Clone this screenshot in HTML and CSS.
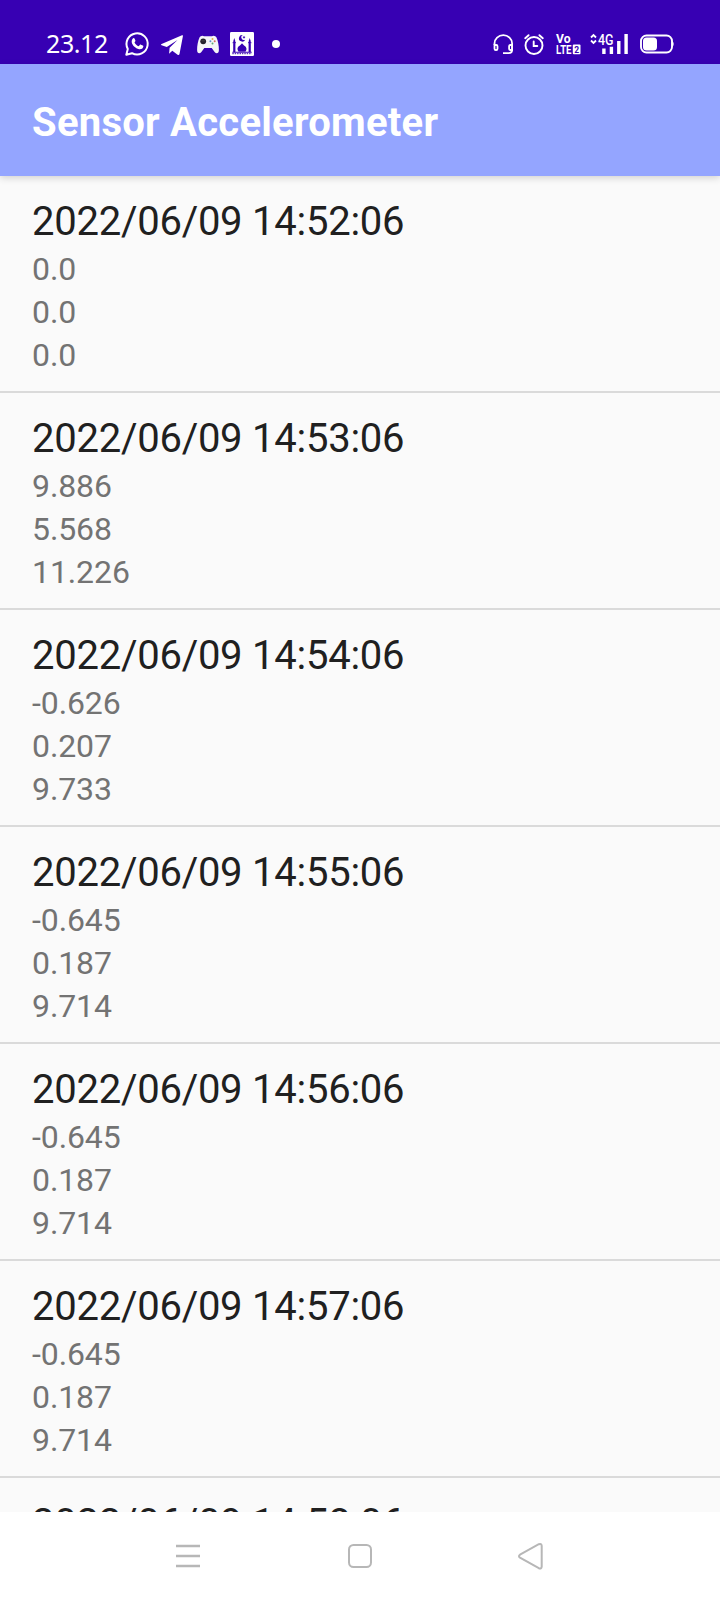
FILE: index.html
```html
<!DOCTYPE html>
<html lang="en">
<head>
<meta charset="utf-8">
<title>Sensor Accelerometer</title>
<link rel="stylesheet" href="styles.css">
</head>
<body>
<div class="screen">
  <header class="status">
    <div class="status-left">
      <span class="clock">23.12</span>
      <svg class="whatsapp" width="24" height="24" viewBox="0 0 24 24"><path d="M1.3 22.7 2.8 17A10.6 10.6 0 1 1 7 21.2Z" fill="none" stroke="#fff" stroke-width="2" stroke-linejoin="round"/><path d="M8.3 6.2c.7-.3 1.1 0 1.400.7l.7 1.600c.2.600-.1 1-.9 1.900 1 1.900 2.300 3 4.200 3.800l1.100-1.300c.3-.400.7-.400 1.100-.2l1.900.9c.6.300.6.600.5 1.200-.4 2-2.500 2.800-4.200 2.400-3.800-1-7-4.200-7.400-7.300-.1-1.700.6-3.100 1.600-3.700Z" fill="#fff"/></svg>
      <svg class="telegram" width="22" height="20" viewBox="0 0 22 20"><path d="M21 .3.6 9.100c-.8.400-.7 1 0 1.200l5.200 1.600L16.500 4.900 8.600 12.800l-.5 6 3.200-3 5.300 4c1 .5 1.600.2 1.900-.8L21.900 1.300c.2-.9-.2-1.200-.9-1Z" fill="#fff"/></svg>
      <svg class="gamepad" width="22" height="19" viewBox="0 0 22 19"><path d="M2.500 2.500C3.500.8 5.500.1 7 1.200h8c1.500-1.100 3.500-.4 4.500 1.300C21 6 22 11 21.900 15c0 3.400-2.500 4.200-4.300 1.900L14.700 13H7.300l-2.900 3.900C2.600 19.200.1 18.400.1 15 0 11 1 6 2.500 2.500Z" fill="#f5f5f8"/><circle cx="6.200" cy="6.300" r="2.900" fill="#25222d"/><path d="M4.500 5.800h3.400" stroke="#555" stroke-width=".6"/><circle cx="15.500" cy="4" r="1" fill="#dfaf45"/><circle cx="13.400" cy="6.200" r="1" fill="#5a8ed2"/><circle cx="17.700" cy="6.200" r="1" fill="#d46e66"/><circle cx="15.500" cy="8.400" r="1" fill="#5bab70"/></svg>
      <svg class="mosque" width="24" height="24" viewBox="0 0 24 24"><rect width="24" height="24" rx="1.200" fill="#fff"/><g fill="#3700b3"><path d="M12.800 3a3.300 3.300 0 1 0 2.400 4.700 2.600 2.600 0 1 1-2.400-4.700ZM14 3.800l.5 1 1 .1-.8.7.2 1-.9-.5-.9.500.2-1-.8-.7 1-.1ZM12 11c.4 2 4.500 3 4.500 6 0 1-.4 1.800-1 2.500h-7c-.6-.7-1-1.500-1-2.500C7.500 14 11.600 13 12 11ZM3.200 12h2.200v8H3.200ZM4.300 6l1 3v4h-2V9ZM2.600 10.200H6v1H2.600ZM18.600 12h2.200v8h-2.200ZM19.700 6l1 3v4h-2V9ZM18 10.200h3.400v1H18ZM2.300 19.700h19.400v1.100H2.300Z"/><path d="M2.300 21.700h19.400" stroke="#3700b3" stroke-width="1" stroke-dasharray="1.500 .9"/></g></svg>
      <svg class="dot" width="8" height="8" viewBox="0 0 8 8"><circle cx="4" cy="4" r="4" fill="#fff"/></svg>
    </div>
    <div class="status-right">
      <svg class="headset" width="21" height="21" viewBox="0 0 21 21" fill="none" stroke="#fff" stroke-width="1.800"><path d="M1.500 11V9.500a8.800 8.300 0 0 1 17.600 0V15.500c0 2.700-1 3.700-3.400 3.700H10"/><path d="M1.500 11h1.700c.9 0 1.300.4 1.300 1.300v2.400c0 .9-.4 1.300-1.300 1.300H2.800c-.9 0-1.300-.4-1.300-1.300ZM19.100 11h-1.700c-.9 0-1.300.4-1.300 1.300v2.400c0 .9.4 1.300 1.300 1.300h1.700Z"/></svg>
      <svg class="alarm" width="20" height="21" viewBox="0 0 20 21" fill="none" stroke="#fff" stroke-width="1.900" stroke-linecap="round"><circle cx="10" cy="11.500" r="8.500"/><path d="M1.200 4.200 4.600 1.200M18.800 4.200l-3.400-3M9.700 7.500V12h3.600"/></svg>
      <svg class="volte" width="25" height="21" viewBox="0 0 25 21"><g fill="#fff" font-family="Roboto, sans-serif" font-weight="700" font-size="13.500"><text x="0" y="9.300" textLength="14.500" lengthAdjust="spacingAndGlyphs">Vo</text><text x="0" y="20.200" textLength="15.500" lengthAdjust="spacingAndGlyphs">LTE</text></g><rect x="16.800" y="10.600" width="7.700" height="9.600" rx="1" fill="#fff"/><text x="18.300" y="18.500" font-family="Roboto, sans-serif" font-size="8.500" font-weight="700" fill="#3700b3">2</text></svg>
      <svg class="signal" width="40" height="22" viewBox="0 0 40 22"><path d="M1 4.500 3.500 2 6 4.500M1 7.500 3.500 10 6 7.500" fill="none" stroke="#fff" stroke-width="1.800"/><text x="8" y="12" textLength="15.500" lengthAdjust="spacingAndGlyphs" font-family="Roboto, sans-serif" font-size="14.500" font-weight="500" fill="#fff">4G</text><path d="M12.200 15.500h3.400V21h-3.400ZM19.700 13.800h3.400V21h-3.400ZM27.100 8h3.400v13h-3.400ZM34.400 1h3.400v20h-3.400Z" fill="#fff"/></svg>
      <svg class="battery" width="34" height="20" viewBox="0 0 34 20"><rect x="1" y="1.500" width="31" height="17" rx="5.500" fill="none" stroke="#fff" stroke-width="1.900"/><rect x="3" y="3.600" width="14" height="12.800" rx="3.500" fill="#fff"/><path d="M32 7c2.200.8 2.200 5.200 0 6Z" fill="#fff"/></svg>
    </div>
  </header>
  <div class="appbar"><h1 class="title">Sensor Accelerometer</h1></div>
  <main class="list">
    <section class="item"><h2 class="date">2022/06/09 14:52:06</h2><p class="value">0.0</p><p class="value">0.0</p><p class="value">0.0</p></section>
    <section class="item"><h2 class="date">2022/06/09 14:53:06</h2><p class="value">9.886</p><p class="value">5.568</p><p class="value">11.226</p></section>
    <section class="item"><h2 class="date">2022/06/09 14:54:06</h2><p class="value">-0.626</p><p class="value">0.207</p><p class="value">9.733</p></section>
    <section class="item"><h2 class="date">2022/06/09 14:55:06</h2><p class="value">-0.645</p><p class="value">0.187</p><p class="value">9.714</p></section>
    <section class="item"><h2 class="date">2022/06/09 14:56:06</h2><p class="value">-0.645</p><p class="value">0.187</p><p class="value">9.714</p></section>
    <section class="item"><h2 class="date">2022/06/09 14:57:06</h2><p class="value">-0.645</p><p class="value">0.187</p><p class="value">9.714</p></section>
    <section class="item"><h2 class="date">2022/06/09 14:58:06</h2></section>
  </main>
  <nav class="navbar">
    <svg class="menu" width="24" height="26" viewBox="0 0 24 26"><path d="M0 3h24M0 13h24M0 23h24" stroke="#b7b7b7" stroke-width="2.400"/></svg>
    <svg class="home" width="24" height="26" viewBox="0 0 24 26"><rect x="1" y="2" width="22" height="22" rx="4.500" fill="none" stroke="#b7b7b7" stroke-width="2"/></svg>
    <svg class="back" width="26" height="28" viewBox="0 0 26 28"><path d="M2 12.700 20.800 2.200Q23.500 1.200 23.700 3.800v20.800q-.2 2.600-2.900 1.600L2 15.600q-2-1.400 0-2.900Z" fill="none" stroke="#b7b7b7" stroke-width="2"/></svg>
  </nav>
</div>
</body>
</html>
```

FILE: styles.css
```css
* { box-sizing: border-box; }
body, h1, h2, p { margin: 0; }
body { font-family: Roboto, "Liberation Sans", sans-serif; }
svg { display: block; flex: none; overflow: visible; }

.screen {
  display: flex;
  flex-direction: column;
  width: 720px;
  height: 1600px;
  overflow: hidden;
  background: #fafafa;
}

.status {
  display: flex;
  justify-content: space-between;
  flex: none;
  height: 64px;
  padding: 24px 46px 0;
  background: #3700b3;
}
.status-left, .status-right {
  display: flex;
  align-items: center;
  height: 40px;
}
.clock {
  width: 79px;
  margin-top: -2px;
  color: #fff;
  font: 400 25px/40px "Noto Sans", sans-serif;
  letter-spacing: -0.4px;
}
.whatsapp { margin: 0 12px 0 0; }
.telegram { margin: 1px 14px 0 0; }
.gamepad { margin-right: 11px; }
.mosque { margin-right: 18px; }

.headset { margin-right: 10px; }
.alarm { margin: 0 12px 0 0; }
.volte { margin-right: 9px; }
.signal { margin-right: 10px; }

.appbar {
  display: flex;
  align-items: center;
  flex: none;
  z-index: 1;
  height: 112px;
  padding: 6px 32px 0;
  background: #94a5ff;
  box-shadow: 0 2px 7px rgba(0, 0, 0, 0.16);
}
.title {
  color: #fff;
  font-size: 40px;
  font-weight: 700;
  letter-spacing: 0.25px;
  line-height: 48px;
}

.list {
  flex: 1;
  min-height: 0;
  overflow: hidden;
}
.item {
  height: 217px;
  padding: 22px 32px 14px;
  border-bottom: 2px solid #dadada;
}
.date {
  margin-bottom: 3px;
  color: #202020;
  font-size: 40px;
  font-weight: 400;
  letter-spacing: -0.25px;
  line-height: 47px;
}
.value {
  color: #737373;
  font-size: 32px;
  letter-spacing: -0.1px;
  line-height: 43px;
}

.navbar {
  display: flex;
  align-items: center;
  justify-content: space-between;
  flex: none;
  height: 88px;
  padding: 0 176px;
  background: #fff;
}
.home { margin-left: 2px; }
```
